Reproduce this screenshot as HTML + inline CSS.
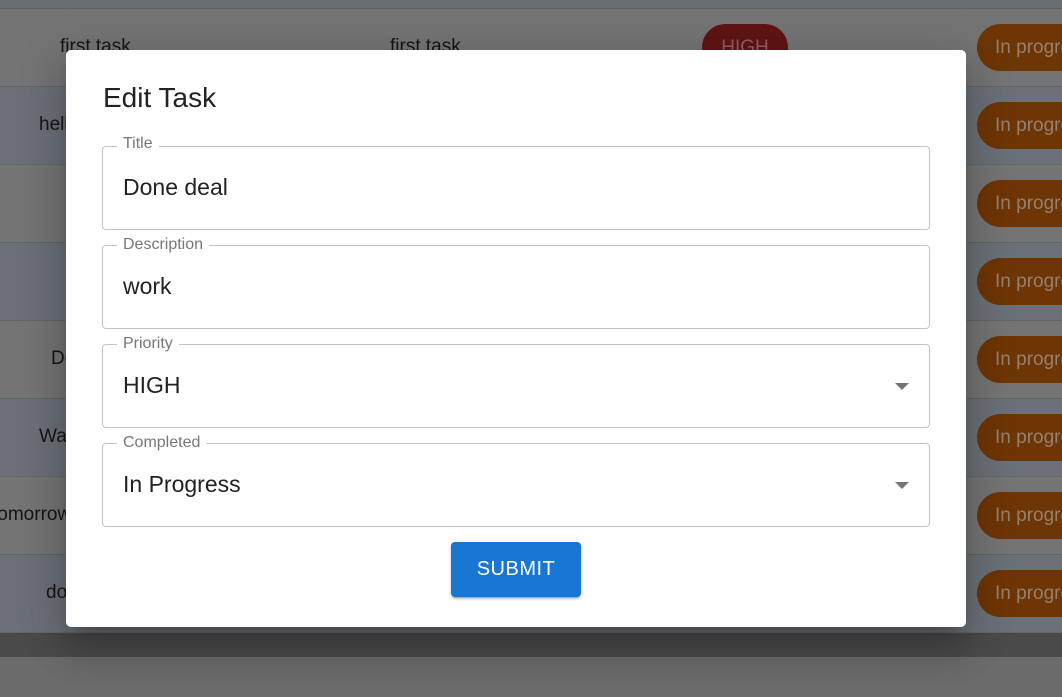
<!DOCTYPE html>
<html><head><style>
*{box-sizing:border-box;margin:0;padding:0}
body{width:1062px;height:697px;overflow:hidden;background:#6b6b6b;font-family:"Liberation Sans",sans-serif;position:relative}
.top{position:absolute;left:0;top:0;width:1062px;height:9px;background:#6a6d71;border-bottom:1px solid #606367}
.row{position:absolute;left:0;width:1062px;height:78px;border-bottom:1px solid #63666a;font-size:19px;color:#151515}
.g{background:#747474}.b{background:#6b7078}
.row span{position:absolute;top:27px}
.pill{position:absolute;left:977px;top:15px;width:120px;height:47px;border-radius:24px;background:#6e3505;color:#958070;font-size:19px;line-height:47px;padding-left:18px}
.high{position:absolute;left:702px;top:15px;width:86px;height:47px;border-radius:24px;background:#601414;color:#8e6060;font-size:19px;line-height:47px;text-align:center}
.band{position:absolute;left:0;top:633px;width:1062px;height:24px;background:#4a4a4a}
.modal{position:absolute;left:66px;top:50px;width:900px;height:577px;background:#fff;border-radius:5px;box-shadow:0 11px 15px -7px rgba(0,0,0,.2),0 24px 38px 3px rgba(0,0,0,.14),0 9px 46px 8px rgba(0,0,0,.12)}
h2{position:absolute;left:37px;top:32px;font-size:28px;font-weight:400;color:#222}
.f{position:absolute;left:36px;width:828px;height:84px;border:1px solid #c4c4c4;border-radius:4px}
.f label{position:absolute;left:14px;top:-11px;background:#fff;padding:0 6px;font-size:16px;color:#777;line-height:20px}
.f .v{position:absolute;left:20px;top:27px;font-size:23px;color:#222}
.arr{position:absolute;right:20px;top:38px;width:0;height:0;border-left:7px solid transparent;border-right:7px solid transparent;border-top:7px solid #757575}
.btn{position:absolute;left:385px;top:492px;width:130px;height:55px;background:#1976d2;color:#fff;border-radius:4px;font-size:20px;line-height:55px;text-align:center;letter-spacing:.5px;box-shadow:0 3px 1px -2px rgba(0,0,0,.2),0 2px 2px 0 rgba(0,0,0,.14),0 1px 5px 0 rgba(0,0,0,.12)}
</style></head><body>
<div class="top"></div>
<div class="row g" style="top:9px"><span style="left:60px">first task</span><span style="left:390px">first task</span><div class="high">HIGH</div><div class="pill">In progress</div></div>
<div class="row b" style="top:87px"><span style="left:39px">hello</span><div class="pill">In progress</div></div>
<div class="row g" style="top:165px"><div class="pill">In progress</div></div>
<div class="row b" style="top:243px"><div class="pill">In progress</div></div>
<div class="row g" style="top:321px"><span style="left:51px">Do</span><div class="pill">In progress</div></div>
<div class="row b" style="top:399px"><span style="left:39px">Wa</span><div class="pill">In progress</div></div>
<div class="row g" style="top:477px"><span style="left:-8px">tomorrow</span><div class="pill">In progress</div></div>
<div class="row b" style="top:555px"><span style="left:46px">do</span><div class="pill">In progress</div></div>
<div class="band"></div>
<div class="modal">
<h2>Edit Task</h2>
<div class="f" style="top:96px"><label style="top:-13px">Title</label><div class="v">Done deal</div></div>
<div class="f" style="top:195px"><label>Description</label><div class="v">work</div></div>
<div class="f" style="top:294px"><label>Priority</label><div class="v">HIGH</div><div class="arr"></div></div>
<div class="f" style="top:393px"><label>Completed</label><div class="v">In Progress</div><div class="arr"></div></div>
<div class="btn">SUBMIT</div>
</div>
</body></html>
